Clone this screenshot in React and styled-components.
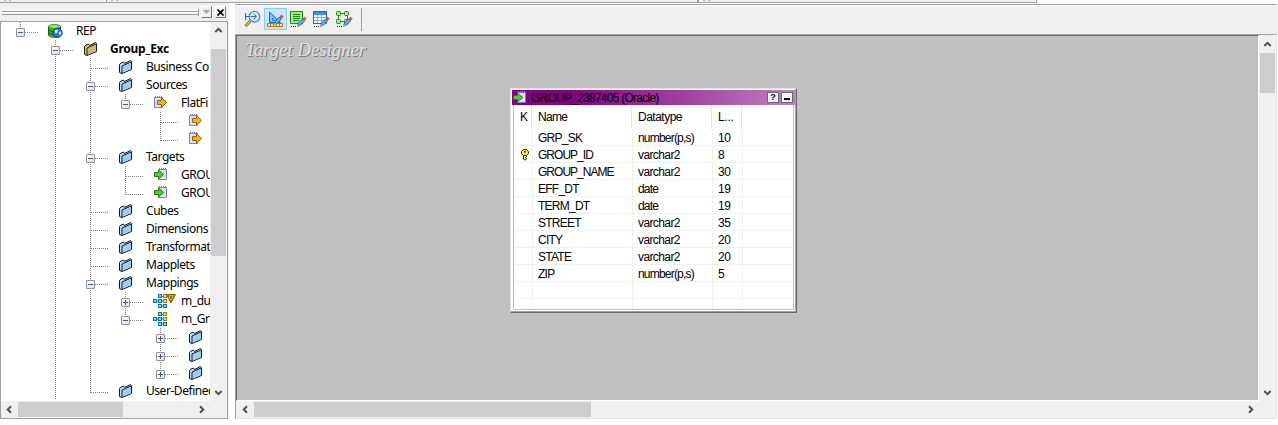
import React from 'react';
import styled, { createGlobalStyle, css } from 'styled-components';

const Global = createGlobalStyle`
  * { box-sizing: border-box; }
  body { margin: 0; background: #fff; overflow: hidden; }
  svg { display: block; flex: none; }
`;

const Screen = styled.div`
  width: 1278px;
  height: 425px;
  display: flex;
  flex-direction: column;
  overflow: hidden;
  color: #000;
  font-family: 'Noto Sans', 'Open Sans', sans-serif;
`;
const TopStrip = styled.div`
  display: flex;
  height: 3px;
  flex: none;
`;
const Band = styled.div`
  width: ${p => p.$w}px;
  background: #f0f0f0;
  border-bottom: 1px solid #a0a0a0;
  border-right: ${p => p.$edge || 1}px solid #a0a0a0;
  padding-left: 4px;
  display: flex;
  gap: 3px;
`;
const Dot = styled.i`
  width: 2px;
  height: 1px;
  background: #b4b4b4;
`;
const Body = styled.div`
  display: flex;
  flex: 1;
  min-height: 0;
`;

/* navigator */
const Navigator = styled.aside`
  width: 229px;
  height: 416px;
  background: #f0f0f0;
  display: flex;
  flex-direction: column;
  margin-right: 6px;
`;
const Caption = styled.div`
  height: 18px;
  padding: 3px 3px 0 2px;
  display: flex;
  gap: 2px;
`;
const Grip = styled.div`
  width: 198px;
  height: 7px;
  margin-top: 3px;
  border: solid #a0a0a0;
  border-width: 0 1px 0 0;
  background: linear-gradient(#fff 0 1px, #f4f4f4 1px 2px, #a0a0a0 2px 3px, #fff 3px 4px, #f4f4f4 4px 5px, #a0a0a0 5px 6px, transparent 6px);
`;
const CaptionButton = styled.div`
  width: 11px;
  height: 12px;
  background: #f0f0f0;
  border: 1px solid;
  border-color: #fff #777 #777 #fff;
  display: flex;
  align-items: center;
  justify-content: center;
  margin-left: ${p => p.$gap || 0}px;
`;
const Frame = styled.div`
  height: 398px;
  border: 1px solid #a0a0a0;
  width: 228px;
  display: flex;
  flex-direction: column;
  background: #f0f0f0;
`;
const Split = styled.div`
  display: flex;
  flex: 1;
  min-height: 0;
`;
const Tree = styled.div`
  width: 209px;
  height: 379px;
  background: #fff;
  overflow: hidden;
  padding-left: 2px;
`;
const TreeRow = styled.div`
  display: flex;
  height: 18px;
  align-items: flex-start;
  white-space: nowrap;
`;
const dotsV = 'repeating-linear-gradient(to bottom, #808080 0 1px, transparent 1px 2px)';
const dotsH = 'repeating-linear-gradient(to right, #808080 0 1px, transparent 1px 2px)';
const Cell = styled.div`
  width: 35px;
  height: 18px;
  flex: none;
  display: flex;
  padding: 6px 0 0 13px;
  background-repeat: no-repeat;
  background-image: ${p => (p.$v ? dotsV : 'none')}, ${p => (p.$h ? dotsH : 'none')};
  background-position: 17px 0, 18px 10px;
  background-size: 1px ${p => (p.$v === 'half' ? 11 : 18)}px, 18px 1px;
`;
const Expander = styled.div`
  width: 9px;
  height: 9px;
  border: 1px solid #919191;
  border-radius: 1px;
  background:
    linear-gradient(#3c5aa8, #3c5aa8) 1px 3px / 5px 1px no-repeat,
    linear-gradient(#3c5aa8, #3c5aa8) 3px 1px / 1px ${p => (p.$open ? 0 : 5)}px no-repeat,
    linear-gradient(135deg, #fff, #e0e0e0);
`;
const IconCell = styled.div`
  width: 38px;
  height: 18px;
  flex: none;
  display: flex;
  padding: 1px 0 0 10px;
`;
const Label = styled.span`
  font-size: 12px;
  line-height: 18px;
  letter-spacing: ${p => (p.$bold ? -0.25 : -0.45)}px;
  margin-left: ${p => (p.$bold ? -1 : 0)}px;
  font-weight: ${p => (p.$bold ? 700 : 400)};
`;

/* scroll bars */
const Track = styled.div`
  display: flex;
  flex: none;
  background: #f0f0f0;
  align-items: center;
  ${p => p.$vertical
    ? css`flex-direction: column; width: 17px; padding-right: 1px; padding-top: ${p.$inset || 0}px;`
    : css`height: 17px; padding-bottom: 1px; padding-left: ${p.$inset || 0}px;`}
`;
const Arrow = styled.div`
  width: 17px;
  height: 17px;
  display: flex;
  flex: none;
  align-items: center;
  justify-content: center;
`;
const Thumb = styled.div`
  background: #cdcdcd;
  flex: none;
  ${p => p.$vertical
    ? css`width: 15px; height: ${p.$size}px; margin-top: ${p.$offset || 0}px;`
    : css`height: 15px; width: ${p.$size}px; margin-left: ${p.$offset || 0}px;`}
`;
const Spacer = styled.div`flex: 1;`;

/* designer */
const Designer = styled.main`
  width: 1042px;
  height: 415px;
  margin-top: 1px;
  border-top: 1px solid #a0a0a0;
  display: flex;
  flex-direction: column;
`;
const Toolbar = styled.div`
  height: 29px;
  flex: none;
  border-top: 1px solid #fff;
  background: #f0f0f0;
  display: flex;
  align-items: flex-start;
  padding: 2px 0 0 6px;
  margin-right: -1px;
`;
const Tool = styled.div`
  width: 23px;
  height: 22px;
  padding: 1px 0 0 2px;
  border: 1px solid ${p => (p.$active ? '#90c8f6' : 'transparent')};
  background: ${p => (p.$active ? '#cce4f7' : 'transparent')};
`;
const Separator = styled.div`
  width: 1px;
  height: 23px;
  background: #a0a0a0;
  margin-left: 5px;
`;
const Workspace = styled.div`
  flex: 1;
  border: 1px solid;
  border-color: #a0a0a0 #e3e3e3 #e3e3e3 #a0a0a0;
  display: flex;
  flex-direction: column;
  background: #f0f0f0;
`;
const Canvas = styled.div`
  width: 1023px;
  height: 366px;
  position: relative;
  background: #c0c0c0;
  border-style: solid;
  border-width: 1px;
  border-color: #696969 #fff #fff #696969;
`;
const Watermark = styled.div`
  font: italic 19px/24px 'Liberation Serif', serif;
  letter-spacing: -0.1px;
  padding: 2px 0 0 8px;
  color: #e0e0e0;
  text-shadow: 1px 1px 0 #787878;
`;
const TableWindow = styled.section`
  position: absolute;
  left: 273px;
  top: 52px;
  width: 287px;
  height: 225px;
  background: #fff;
  border: 1px solid;
  border-color: #e3e3e3 #696969 #696969 #e3e3e3;
  box-shadow: inset -1px -1px 0 #a0a0a0, inset 1px 1px 0 #fff;
  padding: 1px;
  font-family: 'Liberation Sans', Arial, sans-serif;
  font-size: 12px;
`;
const TitleBar = styled.header`
  height: 15px;
  display: flex;
  align-items: center;
  background: linear-gradient(to right, #800080 0 20%, #c080c0);
  letter-spacing: -0.75px;
  padding-right: 2px;
`;
const TitleText = styled.span`
  flex: 1;
  padding-left: 3px;
  line-height: 15px;
  padding-top: 1px;
`;
const WinButton = styled.div`
  width: 12px;
  height: 11px;
  background: #f0f0f0;
  border: 1px solid #696969;
  box-shadow: inset 1px 1px 0 #fff;
  display: flex;
  align-items: center;
  justify-content: center;
  margin-left: 2px;
  font: bold 9px/9px 'Liberation Sans', sans-serif;
  letter-spacing: 0;
`;
const Minimize = styled.i`
  width: 6px;
  height: 2px;
  margin-top: 3px;
  background: #000;
`;
const Grid = styled.div`
  margin: 0 1px;
  height: 205px;
  overflow: hidden;
  border: 1px solid #c0c0c0;
  border-top: 0;
`;
const GridRow = styled.div`
  display: grid;
  grid-template-columns: ${p => (p.$head ? '18px 100px 80px 30px 1fr' : '19px 100px 80px 30px 1fr')};
  height: ${p => (p.$head ? 24 : 17)}px;
  line-height: ${p => (p.$head ? 24 : 18)}px;
  border-bottom: ${p => (p.$head ? 0 : 1)}px solid #f0f0f0;
`;
const GridCell = styled.div`
  border-right: ${p => (p.$last ? 0 : 1)}px solid ${p => (p.$head ? '#e3e3e3' : '#f0f0f0')};
  padding-left: ${p => p.$pad}px;
  letter-spacing: ${p => p.$track || 0}px;
  white-space: nowrap;
`;

const Folder = ({ tan }) => (
  <svg width="16" height="16" viewBox="0 0 16 16" strokeLinejoin="round">
    <path d="M1.500 5.500 3 4l2.500-1 1 1.500 6-3 1 1v8L4 14.500l-2.500-1Z" fill={tan ? '#dcc98f' : '#b4dcfd'} stroke="#161616" />
    <path d="M5 7.500 13 4v6L5 13.500Z" fill={tan ? '#cdb878' : '#98cefa'} />
    <path d="M4 14V7l9-4" fill="none" stroke="#161616" />
  </svg>
);
const Page = () => (
  <>
    <path d="M1.500 2.500h8v10h-8z" fill="#e4e8ff" stroke="#7878e8" />
    <path d="M2 1.500h8" stroke="#7878e8" strokeDasharray="1 1" />
    <path d="M3 5h5M3 7h5M3 9h5" stroke="#c3ccf6" />
  </>
);
const SourceIcon = () => (
  <svg width="16" height="16" viewBox="0 0 16 16">
    <Page />
    <path d="M4.500 5.500h4V2.500L13.500 7.500l-5 5V9.500h-4Z" fill="#f5b40c" stroke="#95620a" />
  </svg>
);
const TargetIcon = () => (
  <svg width="16" height="16" viewBox="0 0 16 16">
    <g transform="translate(4 0)"><Page /></g>
    <path d="M1.500 5.500h4V3L10.500 7.500l-5 4.500V9.500h-4Z" fill="#4fcf20" stroke="#217a10" />
  </svg>
);
const RepoIcon = () => (
  <svg width="16" height="16" viewBox="0 0 16 16">
    <path d="M.500 3.500v8.500c1 3 10 3 12 0V3.500Z" fill="#39b51d" stroke="#14690a" />
    <path d="M1 7c2 2 8 2 11 0M1 10c2 2 8 2 11 0" stroke="#155e0b" fill="none" />
    <ellipse cx="6.500" cy="3.500" rx="6" ry="2" fill="#8cf05c" stroke="#2d9617" />
    <circle cx="9.500" cy="9.800" r="4.700" fill="#2977db" stroke="#1a3f9e" />
    <path d="M6.500 7.500 10 6.500 9 10l-1.500.5ZM10.500 10l2-2 .8 2-1.300 2.500Z" fill="#dff2ff" />
  </svg>
);
const node = (x, y, c) => (
  <rect key={`${x}-${y}`} x={x} y={y} width="3" height="3" fill={c ? '#ffe25c' : '#75e3ff'} stroke={c ? '#a77900' : '#0672be'} />
);
const MappingIcon = ({ warn }) => (
  <svg width="24" height="16" viewBox="0 0 24 16">
    <path d="M3 8h8M8 3.500h3M8 13h3" stroke="#0672be" />
    {node(0.5, 6.5)}{node(5.5, 1.5)}{node(5.5, 6.5)}{node(5.5, 11.5)}
    {node(10.5, 1.5, 1)}{node(10.5, 6.5, 1)}{node(10.5, 11.5)}
    {warn && <path d="M13.500 1.500h9l-4.500 8.500Z" fill="#e3b91d" stroke="#7a6000" />}
    {warn && <path d="M18 3v3M18 7v1M15 3h1M20 3h1" stroke="#3a2d00" />}
  </svg>
);
const KeyBox = styled.div`
  padding: 3px 0 0 2px;
`;
const KeyIcon = () => (
  <KeyBox>
    <svg width="8" height="12" viewBox="0 0 8 12">
      <path d="M2.500.5h3l2 2v2l-2 2h-3l-2-2v-2Z" fill="#ffee20" stroke="#222" />
      <path d="M2.500 6.500h3V8l-1 .5 1 1-1 1.500h-1l-1-1Z" fill="#ffee20" stroke="#222" />
      <path d="M3 2h2v1.500H3z" fill="#333" />
    </svg>
  </KeyBox>
);
const Pencil = ({ dots = true }) => (
  <>
    <path d="m7.500 16.500 1-3.500 4-4 2 2-4 4Z" fill="#55b4fa" stroke="#1b68bd" />
    <path d="m7 17 .8-2.500L9.500 16Z" fill="#f0c060" />
    <path d="m12.800 8.700 1.700-1.700 1.800 1.800-1.700 1.700Z" fill="#f2542a" stroke="#c23c18" strokeWidth=".6" />
    {dots && <path d="M1 16.500h6" stroke="#222" strokeDasharray="1 1" />}
  </>
);
const ToolIcon = ({ children }) => (
  <svg width="17" height="18" viewBox="0 0 17 18">{children}</svg>
);
const SearchTool = () => (
  <ToolIcon>
    <path d="M1.500 3v7M2 6.500h4" stroke="#1e62b4" />
    <path d="m6.500 11-5 5" stroke="#a25c1c" strokeWidth="3" />
    <path d="m6.500 11-4.500 4.500" stroke="#f3b36a" strokeWidth="1.300" />
    <circle cx="10.500" cy="6.700" r="5.300" fill="#d6f0ff" stroke="#4190cf" strokeWidth="1.300" />
    <path d="M6.500 6.500h6M9.500 3.500l3 3-3 3" fill="none" stroke="#2c72c0" />
  </ToolIcon>
);
const DesignTool = () => (
  <ToolIcon>
    <path d="M2.500 2v10.500h11Z" fill="#75c3fa" stroke="#1768c1" />
    <path d="M5.500 8v2.500H8Z" fill="#e6f5ff" stroke="#1768c1" strokeWidth=".8" />
    <path d="M.500 13.500h15v3H.500Z" fill="#ffe680" stroke="#b87d0b" />
    <path d="M3.500 14v2M6.500 14v2M9.500 14v2M12.500 14v2" stroke="#b87d0b" />
    <g transform="translate(0 -2)"><Pencil dots={false} /></g>
  </ToolIcon>
);
const DocTool = () => (
  <ToolIcon>
    <path d="M.500 1.500h12v12H.500Z" fill="#a6ea88" stroke="#188a18" />
    <path d="M3 4.500h7M3 6.500h7M3 8.500h7M3 10.500h6" stroke="#188a18" />
    <Pencil />
  </ToolIcon>
);
const TableTool = () => (
  <ToolIcon>
    <path d="M.500 1.500h13v12H.500Z" fill="#f3faff" stroke="#1b68bd" />
    <path d="M1 3.500h12" stroke="#3b91e4" strokeWidth="3" />
    <path d="M4.500 5v8M8.500 5v8M1 7.500h12M1 10.500h12" stroke="#79b7e8" />
    <Pencil />
  </ToolIcon>
);
const NodesTool = () => (
  <ToolIcon>
    <path d="M4 3.500h6M4 11.500h6M2.500 5v6M11.500 5v6" stroke="#188a18" />
    {[[0.5, 1.5], [8.5, 1.5], [0.5, 9.5], [8.5, 9.5]].map(([x, y]) => (
      <rect key={`${x}${y}`} x={x} y={y} width="4" height="4" rx="1" fill="#a7ec8d" stroke="#188a18" />
    ))}
    <Pencil />
  </ToolIcon>
);
const turns = { up: 0, right: 90, down: 180, left: 270 };
const ScrollArrow = ({ dir }) => (
  <Arrow>
    <svg width="9" height="9" viewBox="0 0 9 9">
      <path d="M1.300 6 4.500 2.800 7.700 6" fill="none" stroke="#505050" strokeWidth="2" transform={`rotate(${turns[dir]} 4.5 4.5)`} />
    </svg>
  </Arrow>
);

const icons = {
  repo: <RepoIcon />, tan: <Folder tan />, folder: <Folder />, source: <SourceIcon />,
  target: <TargetIcon />, mapping: <MappingIcon />, warn: <MappingIcon warn />,
};
/* guides: one character per level. "." blank, "|" line through, "T" branch, "L" last branch,
   "-"/"=" open box (middle/last), "+"/"*" closed box (middle/last) */
const rows = [
  ['=', 'repo', 'REP'],
  ['.-', 'tan', 'Group_Exc'],
  ['.|T', 'folder', 'Business Co'],
  ['.|-', 'folder', 'Sources'],
  ['.||=', 'source', 'FlatFi'],
  ['.||.T', 'source', ''],
  ['.||.L', 'source', ''],
  ['.|-', 'folder', 'Targets'],
  ['.||T', 'target', 'GROU'],
  ['.||L', 'target', 'GROU'],
  ['.|T', 'folder', 'Cubes'],
  ['.|T', 'folder', 'Dimensions'],
  ['.|T', 'folder', 'Transformat'],
  ['.|T', 'folder', 'Mapplets'],
  ['.|-', 'folder', 'Mappings'],
  ['.||+', 'warn', 'm_du'],
  ['.||=', 'mapping', 'm_Gr'],
  ['.||.+', 'folder', ''],
  ['.||.+', 'folder', ''],
  ['.||.*', 'folder', ''],
  ['.|L', 'folder', 'User-Defined'],
];
const Guide = ({ c }) => (
  <Cell $v={c === '.' ? null : 'L=*'.includes(c) ? 'half' : 'full'} $h={!'.|'.includes(c)}>
    {'-=+*'.includes(c) && <Expander $open={'-='.includes(c)} />}
  </Cell>
);
const columns = [
  ['', 'GRP_SK', 'number(p,s)', '10'],
  ['key', 'GROUP_ID', 'varchar2', '8'],
  ['', 'GROUP_NAME', 'varchar2', '30'],
  ['', 'EFF_DT', 'date', '19'],
  ['', 'TERM_DT', 'date', '19'],
  ['', 'STREET', 'varchar2', '35'],
  ['', 'CITY', 'varchar2', '20'],
  ['', 'STATE', 'varchar2', '20'],
  ['', 'ZIP', 'number(p,s)', '5'],
  ['', '', '', ''],
  ['', '', '', ''],
];

export default function App() {
  return (
    <Screen>
      <Global />
      <TopStrip>
        <Band $w={107}><Dot /><Dot /></Band>
        <Band $w={592} $edge={2}><Dot /><Dot /></Band>
        <Band $w={338}><Dot /><Dot /></Band>
      </TopStrip>
      <Body>
        <Navigator>
          <Caption>
            <Grip />
            <CaptionButton>
              <svg width="7" height="4" viewBox="0 0 7 4"><path d="M0 0h7L3.500 4Z" fill="#a0a0a0" /></svg>
            </CaptionButton>
            <CaptionButton $gap={1}>
              <svg width="7" height="7" viewBox="0 0 7 7"><path d="m.5.5 6 6m0-6-6 6" stroke="#000" strokeWidth="1.700" /></svg>
            </CaptionButton>
          </Caption>
          <Frame>
            <Split>
              <Tree>
                {rows.map(([guides, icon, text], i) => (
                  <TreeRow key={i}>
                    {[...guides].map((c, k) => <Guide key={k} c={c} />)}
                    <IconCell>{icons[icon]}</IconCell>
                    <Label $bold={icon === 'tan'}>{text}</Label>
                  </TreeRow>
                ))}
              </Tree>
              <Track $vertical>
                <ScrollArrow dir="up" />
                <Thumb $vertical $size={207} $offset={10} />
                <Spacer />
                <ScrollArrow dir="down" />
              </Track>
            </Split>
            <Track>
              <ScrollArrow dir="left" />
              <Thumb $size={105} />
              <Spacer />
              <ScrollArrow dir="right" />
              <Arrow />
            </Track>
          </Frame>
        </Navigator>
        <Designer>
          <Toolbar>
            <Tool><SearchTool /></Tool>
            <Tool $active><DesignTool /></Tool>
            <Tool><DocTool /></Tool>
            <Tool><TableTool /></Tool>
            <Tool><NodesTool /></Tool>
            <Separator />
          </Toolbar>
          <Workspace>
            <Split>
              <Canvas>
                <Watermark>Target Designer</Watermark>
                <TableWindow>
                  <TitleBar>
                    <TargetIcon />
                    <TitleText>GROUP_2387405 (Oracle)</TitleText>
                    <WinButton>?</WinButton>
                    <WinButton><Minimize /></WinButton>
                  </TitleBar>
                  <Grid>
                    <GridRow $head>
                      <GridCell $head $pad={6}>K</GridCell>
                      <GridCell $head $pad={6} $track={-0.7}>Name</GridCell>
                      <GridCell $head $pad={6} $track={-0.5}>Datatype</GridCell>
                      <GridCell $head $pad={6} $track={-0.3}>L...</GridCell>
                      <GridCell $last />
                    </GridRow>
                    {columns.map(([key, name, type, len], i) => (
                      <GridRow key={i}>
                        <GridCell $pad={5}>{key && <KeyIcon />}</GridCell>
                        <GridCell $pad={5} $track={name.length > 7 ? -0.98 : -0.75}>{name}</GridCell>
                        <GridCell $pad={5} $track={type === 'varchar2' ? -0.6 : -0.8}>{type}</GridCell>
                        <GridCell $pad={5} $track={-0.3}>{len}</GridCell>
                        <GridCell $last />
                      </GridRow>
                    ))}
                  </Grid>
                </TableWindow>
              </Canvas>
              <Track $vertical $inset={1}>
                <ScrollArrow dir="up" />
                <Thumb $vertical $size={40} />
                <Spacer />
                <ScrollArrow dir="down" />
              </Track>
            </Split>
            <Track $inset={1}>
              <ScrollArrow dir="left" />
              <Thumb $size={337} />
              <Spacer />
              <ScrollArrow dir="right" />
              <Arrow />
            </Track>
          </Workspace>
        </Designer>
      </Body>
    </Screen>
  );
}
